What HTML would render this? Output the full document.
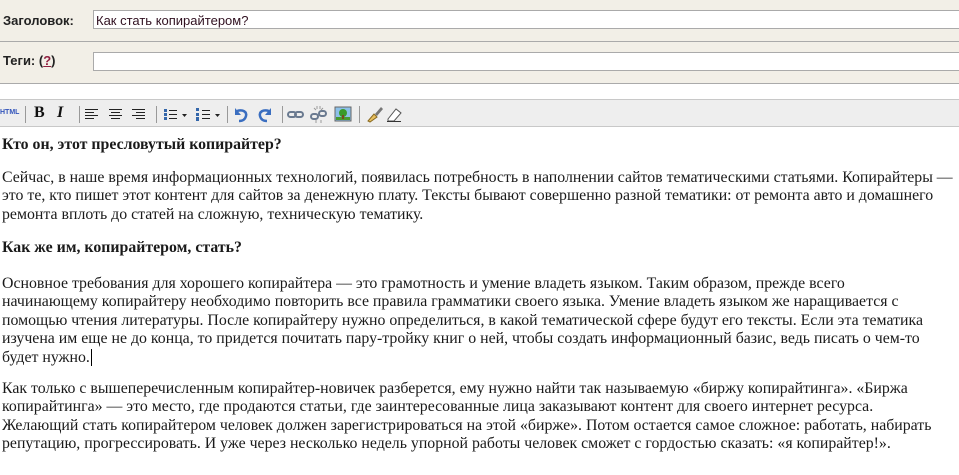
<!DOCTYPE html>
<html><head><meta charset="utf-8"><style>
body{margin:0;width:959px;height:475px;overflow:hidden;background:#fff;position:relative;font-family:"Liberation Sans",sans-serif}
.top{position:absolute;left:0;top:0;width:959px;height:83px;background:#f2efe7}
.hl{position:absolute;left:0;width:959px;height:1px;background:#aaa}
.lbl{position:absolute;left:3px;font-size:13px;font-weight:bold;color:#222}
.inp{position:absolute;left:93px;width:870px;height:19px;background:#fff;border:1px solid #aaa;box-sizing:border-box;font-size:13px;color:#301020;padding:2px 0 0 2px}
.tb{position:absolute;left:0;top:99px;width:959px;height:28px;background:#eee;border-top:1px solid #c8c8c8;border-bottom:1px solid #c8c8c8;box-sizing:border-box}
.sep{position:absolute;top:106px;width:1px;height:17px;background:#999}
.ic{position:absolute;top:105px}
.txt{position:absolute;left:2px;font-family:"Liberation Serif",serif;font-size:15.85px;line-height:18.4px;color:#1a1a1a;white-space:nowrap}
b{font-weight:bold}
</style></head><body>
<div class="top"></div>
<div class="hl" style="top:41px"></div>
<div class="hl" style="top:83px"></div>
<div class="lbl" style="top:13px">Заголовок:</div>
<div class="inp" style="top:10px">Как стать копирайтером?</div>
<div class="lbl" style="top:53px">Теги: (<span style="color:#902040;text-decoration:underline">?</span>)</div>
<div class="inp" style="top:52px"></div>
<div class="tb"></div>
<div style="position:absolute;left:0;top:109px;font-size:7px;font-weight:bold;color:#3355bb">HTML</div>
<div class="sep" style="left:25px"></div>
<div style="position:absolute;left:34px;top:104px;font:bold 16px 'Liberation Serif',serif;color:#111">B</div>
<div style="position:absolute;left:57px;top:104px;font:italic bold 16px 'Liberation Serif',serif;color:#111">I</div>
<div class="sep" style="left:79px"></div>
<svg class="ic" style="left:85px" width="70" height="18"><g stroke="#222" stroke-width="1">
<path d="M0 4.5h13M0 7.5h9M0 10.5h13M0 13.5h9"/>
<path d="M24 4.5h13M26 7.5h9M24 10.5h13M26 13.5h9"/>
<path d="M47 4.5h13M51 7.5h9M47 10.5h13M51 13.5h9"/></g></svg>
<div class="sep" style="left:156px"></div>
<svg class="ic" style="left:163px" width="65" height="18"><g stroke="#222"><path d="M6 5.5h8M6 9.5h8M6 13.5h8M39 5.5h8M39 9.5h8M39 13.5h8"/></g>
<g fill="#3366aa"><rect x="1" y="4" width="3" height="3"/><rect x="1" y="8" width="3" height="3"/><rect x="1" y="12" width="3" height="3"/>
<rect x="33" y="3" width="3" height="3"/><rect x="33" y="8" width="3" height="3"/><rect x="33" y="12" width="3" height="4"/></g>
<path d="M19 9h5l-2.5 3z" fill="#222"/><path d="M52 9h5l-2.5 3z" fill="#222"/></svg>
<div class="sep" style="left:227px"></div>
<svg class="ic" style="left:233px" width="42" height="18"><g fill="none" stroke="#3a6ec0" stroke-width="2.5"><path d="M4 6c6-2 10 1 9 5s-4 5-7 5"/><path d="M36 6c-6-2-10 1-9 5s4 5 7 5"/></g>
<path d="M2 3v7h6z" fill="#3a6ec0"/><path d="M38 3v7h-6z" fill="#3a6ec0"/></svg>
<div class="sep" style="left:282px"></div>
<svg class="ic" style="left:287px" width="66" height="18"><g fill="none" stroke="#6a7a90" stroke-width="2"><rect x="1" y="7" width="8" height="5" rx="2.5"/><rect x="8" y="7" width="8" height="5" rx="2.5"/>
<rect x="24" y="9" width="7" height="5" rx="2.5"/><rect x="32" y="6" width="7" height="5" rx="2.5"/></g>
<g stroke="#999"><path d="M30 1v3M33 1v3M27 3l2 2M36 3l-2 2M29 15v3M34 15v3"/></g>
<rect x="48" y="2" width="16" height="14" fill="#8cc0e8" stroke="#666"/><rect x="49" y="12" width="14" height="3" fill="#4a9a30"/><circle cx="56" cy="8" r="4" fill="#3a9a2a"/><rect x="55" y="10" width="2" height="4" fill="#7a4a20"/></svg>
<div class="sep" style="left:359px"></div>
<svg class="ic" style="left:365px" width="40" height="18"><path d="M3 16l6-7 3 3-7 5z" fill="#e8c060" stroke="#8a6a20"/><path d="M10 9l6-7 2 2-6 7z" fill="#777"/>
<path d="M23 14l8-10 5 4-7 8h-6z" fill="#fff" stroke="#555"/><path d="M22 16.5h14" stroke="#333"/></svg>
<div class="txt" style="top:136px"><b>Кто он, этот пресловутый копирайтер?</b></div>
<div class="txt" style="top:169px">Сейчас, в наше время информационных технологий, появилась потребность в наполнении сайтов тематическими статьями. Копирайтеры —<br>это те, кто пишет этот контент для сайтов за денежную плату. Тексты бывают совершенно разной тематики: от ремонта авто и домашнего<br>ремонта вплоть до статей на сложную, техническую тематику.</div>
<div class="txt" style="top:239px"><b>Как же им, копирайтером, стать?</b></div>
<div class="txt" style="top:275px">Основное требования для хорошего копирайтера — это грамотность и умение владеть языком. Таким образом, прежде всего<br>начинающему копирайтеру необходимо повторить все правила грамматики своего языка. Умение владеть языком же наращивается с<br>помощью чтения литературы. После копирайтеру нужно определиться, в какой тематической сфере будут его тексты. Если эта тематика<br>изучена им еще не до конца, то придется почитать пару-тройку книг о ней, чтобы создать информационный базис, ведь писать о чем-то<br>будет нужно.<span style="border-left:1px solid #000;margin-left:1px"></span></div>
<div class="txt" style="top:380px">Как только с вышеперечисленным копирайтер-новичек разберется, ему нужно найти так называемую «биржу копирайтинга». «Биржа<br>копирайтинга» — это место, где продаются статьи, где заинтересованные лица заказывают контент для своего интернет ресурса.<br>Желающий стать копирайтером человек должен зарегистрироваться на этой «бирже». Потом остается самое сложное: работать, набирать<br>репутацию, прогрессировать. И уже через несколько недель упорной работы человек сможет с гордостью сказать: «я копирайтер!».</div>
</body></html>
